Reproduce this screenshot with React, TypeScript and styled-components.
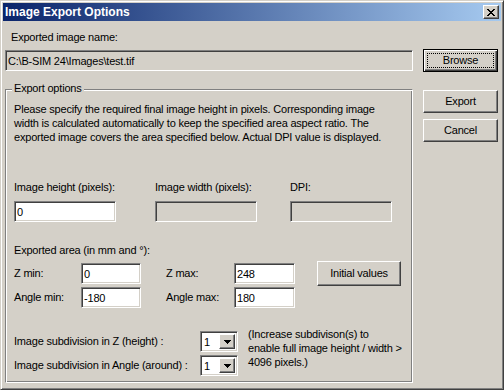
import React from 'react'
import styled, { createGlobalStyle } from 'styled-components'

const GlobalStyle = createGlobalStyle`
  html, body {
    margin: 0;
    padding: 0;
    background: #d4d0c8;
  }
  body {
    font-family: 'Liberation Sans', Arial, sans-serif;
    font-size: 11px;
    letter-spacing: -0.2px;
    color: #000;
  }
`

const raised = `
  border: 1px solid;
  border-color: #fff #404040 #404040 #fff;
  box-shadow: inset -1px -1px 0 #808080, inset 1px 1px 0 #d4d0c8;
`

const sunken = `
  border: 1px solid;
  border-color: #808080 #fff #fff #808080;
  box-shadow: inset 1px 1px 0 #404040, inset -1px -1px 0 #d4d0c8;
`

const Window = styled.div`
  box-sizing: border-box;
  width: 504px;
  height: 390px;
  border: 1px solid;
  border-color: #d4d0c8 #404040 #404040 #d4d0c8;
  box-shadow: inset 1px 1px 0 #fff, inset -1px -1px 0 #808080;
  padding: 2px;
  background: #d4d0c8;
  display: flex;
  flex-direction: column;
`

const TitleBar = styled.div`
  height: 18px;
  flex: 0 0 18px;
  display: flex;
  align-items: center;
  justify-content: space-between;
  padding: 0 2px;
  background: linear-gradient(to right, #0a246a, #a6caf0);
`

const Title = styled.span`
  color: #fff;
  font-weight: bold;
  font-size: 12px;
  letter-spacing: 0;
  line-height: 14px;
`

const CloseButton = styled.div`
  box-sizing: border-box;
  width: 16px;
  height: 14px;
  background: #d4d0c8;
  ${raised}
  display: flex;
  align-items: center;
  justify-content: center;
`

const Body = styled.div`
  flex: 1;
  display: flex;
  gap: 10px;
  padding: 10px 4px 4px 2px;
`

const Main = styled.div`
  flex: 0 0 408px;
  min-width: 0;
  display: flex;
  flex-direction: column;
`

const Side = styled.div`
  flex: 0 0 75px;
  display: flex;
  flex-direction: column;
`

const Label = styled.div<{ $indent?: number }>`
  line-height: 13px;
  white-space: nowrap;
  margin-left: ${({ $indent }) => $indent ?? 0}px;
`

const Field = styled.input<{ $w?: number; $disabled?: boolean }>`
  box-sizing: border-box;
  width: ${({ $w }) => ($w ? `${$w}px` : '100%')};
  height: 21px;
  margin: 0;
  padding: 0 2px;
  font-family: inherit;
  font-size: 11px;
  letter-spacing: -0.2px;
  color: #000;
  outline: none;
  background: ${({ $disabled }) => ($disabled ? '#d4d0c8' : '#fff')};
  ${sunken}
`

const PathField = styled(Field)`
  margin-top: 6px;
`

const Group = styled.div`
  position: relative;
  flex: 1;
  margin-top: 18px;
  border: 1px solid;
  border-color: #808080 #fff #fff #808080;
  box-shadow: inset 1px 1px 0 #fff, inset -1px -1px 0 #808080;
  padding: 12px 8px 0 8px;
`

const Legend = styled.span`
  position: absolute;
  top: -8px;
  left: 6px;
  padding: 0 2px;
  line-height: 13px;
  background: #d4d0c8;
`

const Para = styled.p`
  margin: 0;
  line-height: 14px;
  white-space: nowrap;
`

const DimRow = styled.div`
  display: grid;
  grid-template-columns: 141px 135px 102px;
  margin-top: 37px;
  row-gap: 7px;
`

const SectionLabel = styled(Label)`
  margin-top: 22px;
`

const AreaGrid = styled.div`
  display: grid;
  grid-template-columns: 67px 85px 68px 83px auto;
  grid-template-rows: 25px 21px;
  row-gap: 1px;
  align-items: center;
  margin-top: 4px;
`

const Button = styled.div<{ $w?: number; $h?: number; $focus?: boolean }>`
  position: relative;
  box-sizing: border-box;
  width: ${({ $w }) => $w ?? 75}px;
  height: ${({ $h }) => $h ?? 23}px;
  display: flex;
  align-items: center;
  justify-content: center;
  background: #d4d0c8;
  line-height: 13px;
  ${({ $focus }) =>
    $focus
      ? `
    border: 1px solid #000;
    box-shadow: inset 1px 1px 0 #fff, inset -1px -1px 0 #404040, inset -2px -2px 0 #808080;
    &::after {
      content: '';
      position: absolute;
      inset: 3px;
      border: 1px dotted #000;
    }
  `
      : raised}
`

const SubGrid = styled.div`
  display: grid;
  grid-template-columns: 186px 38px auto;
  grid-template-rows: 21px 21px;
  row-gap: 3px;
  align-items: center;
  margin-top: 23px;
`

const Combo = styled.div`
  box-sizing: border-box;
  width: 38px;
  height: 21px;
  background: #fff;
  ${sunken}
  display: flex;
  align-items: stretch;
  padding: 2px;
`

const ComboValue = styled.span`
  flex: 1;
  line-height: 17px;
  padding-left: 1px;
`

const ComboArrow = styled.div`
  box-sizing: border-box;
  width: 16px;
  background: #d4d0c8;
  ${raised}
  display: flex;
  align-items: center;
  justify-content: center;
`

const Note = styled.p`
  grid-column: 3;
  grid-row: 1 / span 2;
  align-self: start;
  margin: -4px 0 0 10px;
  line-height: 14px;
  white-space: nowrap;
`

const CloseGlyph = () => (
  <svg width="8" height="7" viewBox="0 0 8 7" shapeRendering="crispEdges">
    <path
      d="M0 0h2v1h-2z M6 0h2v1h-2z M1 1h2v1h-2z M5 1h2v1h-2z M2 2h4v1h-4z M3 3h2v1h-2z M2 4h4v1h-4z M1 5h2v1h-2z M5 5h2v1h-2z M0 6h2v1h-2z M6 6h2v1h-2z"
      fill="#000"
    />
  </svg>
)

const DownArrow = () => (
  <svg width="7" height="4" viewBox="0 0 7 4" shapeRendering="crispEdges">
    <path d="M0 0h7v1h-7z M1 1h5v1h-5z M2 2h3v1h-3z M3 3h1v1h-1z" fill="#000" />
  </svg>
)

function ComboBox({ value }: { value: string }) {
  return (
    <Combo>
      <ComboValue>{value}</ComboValue>
      <ComboArrow>
        <DownArrow />
      </ComboArrow>
    </Combo>
  )
}

export default function App() {
  return (
    <>
      <GlobalStyle />
      <Window>
        <TitleBar>
          <Title>Image Export Options</Title>
          <CloseButton>
            <CloseGlyph />
          </CloseButton>
        </TitleBar>
        <Body>
          <Main>
            <Label $indent={6}>Exported image name:</Label>
            <PathField $disabled readOnly defaultValue='C:\B-SIM 24\Images\test.tif' />
            <Group>
              <Legend>Export options</Legend>
              <Para>
                Please specify the required final image height in pixels. Corresponding image
                <br />
                width is calculated automatically to keep the specified area aspect ratio. The
                <br />
                exported image covers the area specified below. Actual DPI value is displayed.
              </Para>

              <DimRow>
                <Label>Image height (pixels):</Label>
                <Label>Image width (pixels):</Label>
                <Label>DPI:</Label>
                <Field $w={102} readOnly defaultValue='0' />
                <Field $w={102} $disabled readOnly />
                <Field $w={102} $disabled readOnly />
              </DimRow>

              <SectionLabel>Exported area (in mm and °):</SectionLabel>
              <AreaGrid>
                <Label>Z min:</Label>
                <Field $w={60} readOnly defaultValue='0' />
                <Label>Z max:</Label>
                <Field $w={61} readOnly defaultValue='248' />
                <Button $w={84} $h={25}>Initial values</Button>
                <Label>Angle min:</Label>
                <Field $w={60} readOnly defaultValue='-180' />
                <Label>Angle max:</Label>
                <Field $w={61} readOnly defaultValue='180' />
              </AreaGrid>

              <SubGrid>
                <Label>Image subdivision in Z (height) :</Label>
                <ComboBox value='1' />
                <Note>
                  (Increase subdivison(s) to
                  <br />
                  enable full image height / width &gt;
                  <br />
                  4096 pixels.)
                </Note>
                <Label>Image subdivision in Angle (around) :</Label>
                <ComboBox value='1' />
              </SubGrid>
            </Group>
          </Main>
          <Side>
            <Button $focus style={{ marginTop: 18 }}>Browse</Button>
            <Button style={{ marginTop: 18 }}>Export</Button>
            <Button style={{ marginTop: 6 }}>Cancel</Button>
          </Side>
        </Body>
      </Window>
    </>
  )
}
